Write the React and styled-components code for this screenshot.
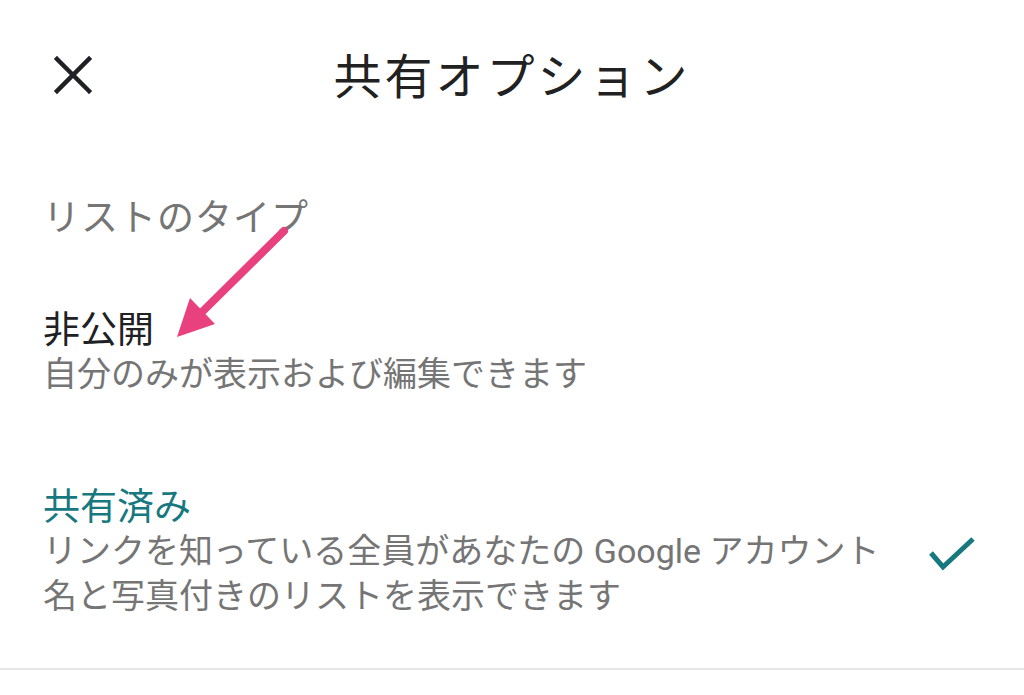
import styled, { createGlobalStyle } from 'styled-components';

const GlobalStyle = createGlobalStyle`
  html, body {
    margin: 0;
    padding: 0;
    background: #ffffff;
  }
  body {
    font-family: "Noto Sans CJK JP", "Noto Sans", sans-serif;
  }
`;

const Screen = styled.div`
  position: relative;
  width: 1024px;
  height: 695px;
  overflow: hidden;
  background: #fff;
`;

const Header = styled.header`
  position: relative;
  height: 146px;
  display: flex;
  align-items: center;
  justify-content: center;
`;

const CloseButton = styled.button`
  position: absolute;
  left: 51px;
  top: 53px;
  width: 44px;
  height: 44px;
  padding: 0;
  border: 0;
  background: none;
  display: flex;
  align-items: center;
  justify-content: center;
`;

const Title = styled.h1`
  margin: 0;
  font-size: 48px;
  font-weight: 400;
  letter-spacing: 3px;
  color: #212121;
  line-height: 1;
`;

const Body = styled.main`
  padding: 0 49px 0 43px;
`;

const SectionLabel = styled.div`
  margin-top: 44px;
  font-size: 37px;
  line-height: 50px;
  color: #757575;
  letter-spacing: 1px;
`;

const Option = styled.div`
  display: flex;
  align-items: center;
  gap: 44px;
  margin-top: ${(p) => p.$top}px;
`;

const OptionText = styled.div`
  flex: 1;
  min-width: 0;
`;

const OptionTitle = styled.div`
  font-size: 37px;
  line-height: 50px;
  color: ${(p) => (p.$active ? '#17787f' : '#202124')};
`;

const OptionDesc = styled.div`
  font-family: Roboto, "Noto Sans CJK JP", sans-serif;
  font-size: 34px;
  line-height: 45px;
  color: #757575;
`;

const CheckSlot = styled.div`
  width: 46px;
  flex: none;
  display: flex;
  justify-content: center;
  padding-top: 10px;
`;

const Divider = styled.hr`
  position: absolute;
  left: 0;
  right: 0;
  top: 668px;
  margin: 0;
  border: 0;
  border-top: 2px solid #e6e6e6;
`;

const Annotation = styled.svg`
  position: absolute;
  left: 0;
  top: 0;
  pointer-events: none;
`;

const options = [
  { title: '非公開', desc: '自分のみが表示および編集できます', top: 62 },
  {
    title: '共有済み',
    desc: 'リンクを知っている全員があなたの Google アカウント名と写真付きのリストを表示できます',
    top: 82,
    active: true,
  },
];

export default function App() {
  return (
    <>
      <GlobalStyle />
      <Screen>
        <Header>
          <CloseButton aria-label="閉じる">
            <svg width="40" height="40" viewBox="0 0 40 40">
              <path d="M4 4 L36 36 M36 4 L4 36" stroke="#202124" strokeWidth="4.5" strokeLinecap="square" fill="none" />
            </svg>
          </CloseButton>
          <Title>共有オプション</Title>
        </Header>
        <Body>
          <SectionLabel>リストのタイプ</SectionLabel>
          {options.map((o) => (
            <Option key={o.title} $top={o.top}>
              <OptionText>
                <OptionTitle $active={o.active}>{o.title}</OptionTitle>
                <OptionDesc>{o.desc}</OptionDesc>
              </OptionText>
              <CheckSlot>
                {o.active && (
                  <svg width="46" height="36" viewBox="0 0 46 36">
                    <path d="M2 17 L14 31 L44 3" stroke="#17787f" strokeWidth="5" fill="none" />
                  </svg>
                )}
              </CheckSlot>
            </Option>
          ))}
        </Body>
        <Divider />
        <Annotation width="1024" height="695">
          <line x1="284" y1="231" x2="200" y2="314" stroke="#e8417e" strokeWidth="8" strokeLinecap="round" />
          <polygon points="177,337 190,298 215,324" fill="#e8417e" />
        </Annotation>
      </Screen>
    </>
  );
}
